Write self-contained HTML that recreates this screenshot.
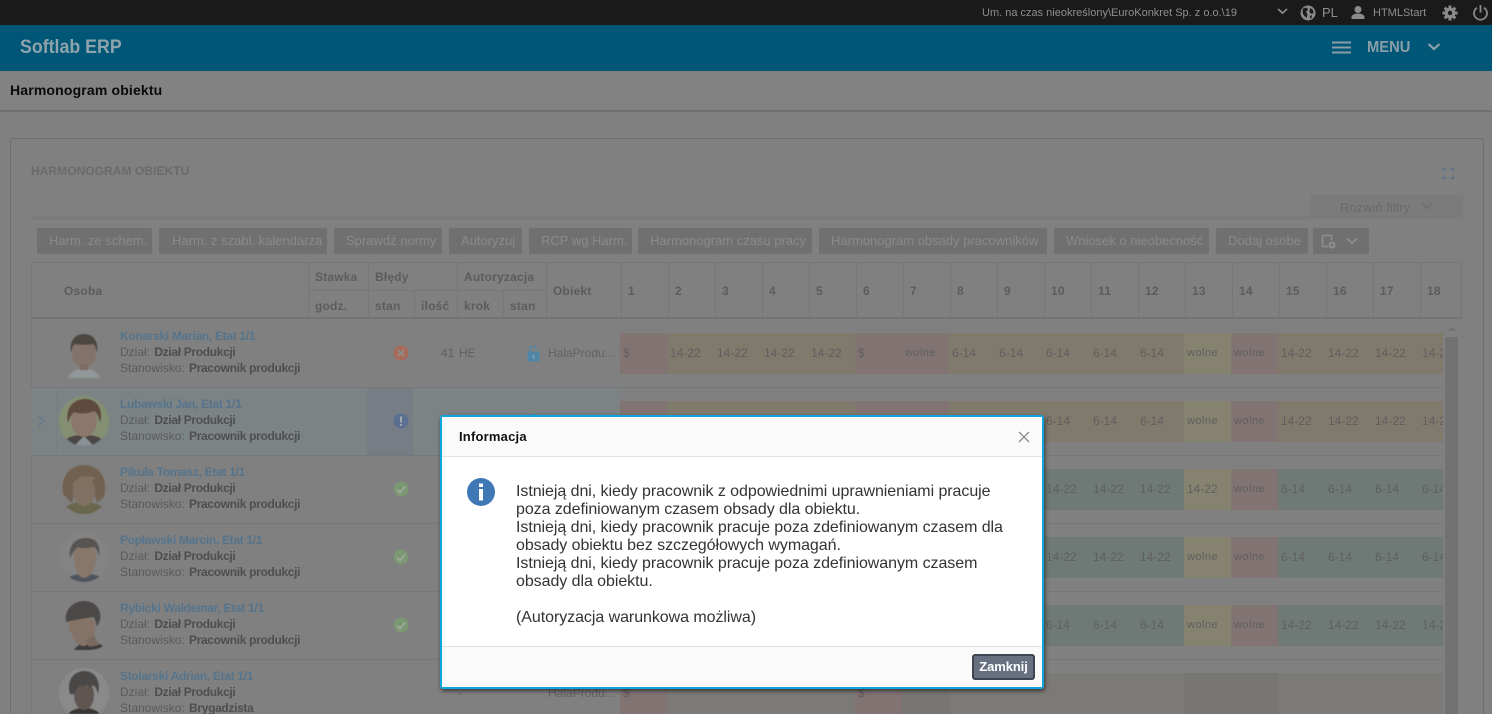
<!DOCTYPE html>
<html lang="pl"><head><meta charset="utf-8"><title>Harmonogram obiektu</title>
<style>
*{box-sizing:border-box}
html,body{margin:0;padding:0;width:1492px;height:714px;overflow:hidden;background:#808080;font-family:"Liberation Sans",sans-serif}
body{position:relative}
.a{position:absolute;white-space:nowrap}
svg{position:absolute;display:block}
.ph{filter:blur(.5px) saturate(.8)}
.btn{position:absolute;top:228px;height:26px;background:#707070;border-radius:2px;color:#8a8a8a;font-size:13px;line-height:26px;padding-left:12px;text-align:left;white-space:nowrap;overflow:hidden}
.h{position:absolute;margin-top:1px;color:#5c5c5c;font-size:12px;font-weight:bold;white-space:nowrap;letter-spacing:.2px}
.v{position:absolute;background:#777;width:1px}
.n{position:absolute;left:120px;font-size:12px;line-height:16px;white-space:nowrap;color:#5a5a5a}
.n b{color:#4e4e4e;letter-spacing:-.33px;margin-left:1px}
.n i{font-style:normal;font-weight:bold;color:#55748c;letter-spacing:-.3px}
.r{position:absolute;left:620px;width:823px;height:41px;display:flex;overflow:hidden}
.r span{flex:0 0 47px;width:47px;height:41px;line-height:40px;padding-left:3px;font-size:12px;color:#5f5f5f;overflow:hidden}
.o{background:#807a6d}.e{background:#837474}.y{background:#85826f}.g{background:#6f7a77}
.r .w{font-size:11px;letter-spacing:.45px;line-height:41px}
.c{background:#7c7a76}.d{background:#787672}
.t{position:absolute;left:516px;margin-top:1px;font-size:16px;line-height:18px;color:#333;white-space:nowrap;letter-spacing:-.06px}
</style></head><body>

<div class="a" style="left:0;top:0;width:1492px;height:25px;background:#1a1a1a"></div>
<div class="a" style="left:982px;top:6px;font-size:11px;line-height:14px;color:#8f8f8f">Um. na czas nieokreślony\EuroKonkret Sp. z o.o.\19</div>
<svg style="left:1277px;top:7px" width="11" height="9" viewBox="0 0 11 9"><path d="M1 2l4.500 4L10 2" fill="none" stroke="#8a8a8a" stroke-width="1.800"/></svg>
<svg style="left:1300px;top:5px" width="16" height="16" viewBox="0 0 16 16"><circle cx="8" cy="8" r="7.500" fill="#8a8a8a"/><path d="M3 3.500l3.500-1 1.500 2-2 2.500 1.500 2.500-1 3.500-3-3-1-3zM10 3l3 2 .5 3-2 1-2-2zM10 11l2-1-.5 3-1.500 .5z" fill="#1a1a1a"/></svg>
<div class="a" style="left:1322px;top:6px;font-size:13px;line-height:14px;color:#8f8f8f">PL</div>
<svg style="left:1351px;top:5px" width="14" height="15" viewBox="0 0 14 15"><circle cx="7" cy="4.500" r="3.500" fill="#8a8a8a"/><path d="M.5 14v-2c0-2 3-3.500 6.500-3.500s6.500 1.500 6.500 3.500v2z" fill="#8a8a8a"/></svg>
<div class="a" style="left:1373px;top:6px;font-size:11px;line-height:14px;color:#8f8f8f">HTMLStart</div>
<svg style="left:1442px;top:5px" width="16" height="16" viewBox="0 0 16 16"><circle cx="8" cy="8" r="3.800" fill="none" stroke="#8a8a8a" stroke-width="3.200"/><path d="M8 .5v3M8 12.500v3M.5 8h3M12.500 8h3M2.700 2.700l2.100 2.100M11.200 11.200l2.100 2.100M2.700 13.300l2.100-2.100M11.200 4.800l2.100-2.100" stroke="#8a8a8a" stroke-width="3"/></svg>
<svg style="left:1472px;top:4px" width="17" height="17" viewBox="0 0 17 17"><path d="M5 3.700a6.500 6.500 0 1 0 7 0M8.500 1v7.500" fill="none" stroke="#8a8a8a" stroke-width="1.800"/></svg>

<div class="a" style="left:0;top:25px;width:1492px;height:46px;background:#005676"></div>
<div class="a" style="left:20px;top:36px;font-size:19px;line-height:24px;font-weight:bold;color:#8ea4ad;transform-origin:0 0;transform:scaleX(.935)">Softlab ERP</div>
<svg style="left:1332px;top:41px" width="20" height="13" viewBox="0 0 20 13"><path d="M0 1.500h19M0 6.500h19M0 11.500h19" stroke="#8a9ea8" stroke-width="2"/></svg>
<div class="a" style="left:1367px;top:38px;font-size:16px;line-height:19px;font-weight:bold;color:#8a9ea8;transform-origin:0 0;transform:scaleX(.92)">MENU</div>
<svg style="left:1427px;top:42px" width="14" height="10" viewBox="0 0 14 10"><path d="M1.500 2L7 7l5.500-5" fill="none" stroke="#8a9ea8" stroke-width="2.200"/></svg>

<div class="a" style="left:0;top:71px;width:1492px;height:41px;background:#828282;border-bottom:2px solid #6f6f6f"></div>
<div class="a" style="left:10px;top:82px;font-size:14px;line-height:17px;font-weight:bold;color:#0a0a0a;letter-spacing:.16px">Harmonogram obiektu</div>

<div class="a" style="left:10px;top:138px;width:1474px;height:580px;border:1px solid #6e6e6e;border-radius:2px;background:#808080"></div>
<div class="a" style="left:31px;top:164px;font-size:12px;line-height:15px;font-weight:bold;color:#6a6a6a;letter-spacing:.05px">HARMONOGRAM OBIEKTU</div>
<svg style="left:1443px;top:168px" width="11" height="11" viewBox="0 0 11 11"><path d="M.7 3.500V.7h2.800M7.500.7h2.800v2.800M10.300 7.500v2.800H7.500M3.500 10.300H.7V7.500" fill="none" stroke="#5f7085" stroke-width="1.400"/></svg>
<div class="a" style="left:31px;top:216px;width:1280px;height:4px;background:#7b7b7b"></div>
<div class="a" style="left:1310px;top:195px;width:153px;height:24px;background:#7b7b7b"></div>
<div class="a" style="left:1340px;top:200px;font-size:13px;line-height:15px;color:#6a6a6a">Rozwiń filtry</div>
<svg style="left:1421px;top:202px" width="12" height="9" viewBox="0 0 12 9"><path d="M1 1.500l5 5 5-5" fill="none" stroke="#6a6a6a" stroke-width="1.200"/></svg>

<div class="btn" style="left:37px;width:115px">Harm. ze schem.</div>
<div class="btn" style="left:159px;width:168px;padding-left:13px">Harm. z szabl. kalendarza</div>
<div class="btn" style="left:334px;width:108px">Sprawdź normy</div>
<div class="btn" style="left:449px;width:73px">Autoryzuj</div>
<div class="btn" style="left:529px;width:103px">RCP wg Harm.</div>
<div class="btn" style="left:638px;width:174px">Harmonogram czasu pracy</div>
<div class="btn" style="left:819px;width:228px">Harmonogram obsady pracowników</div>
<div class="btn" style="left:1054px;width:155px">Wniosek o nieobecność</div>
<div class="btn" style="left:1216px;width:92px">Dodaj osobe</div>
<div class="btn" style="left:1313px;width:56px"></div>
<svg style="left:1321px;top:234px" width="16" height="16" viewBox="0 0 16 16"><path d="M7 12.500H1.500v-11h9V6" fill="none" stroke="#8c8c8c" stroke-width="1.800"/><circle cx="11" cy="11" r="2.500" fill="none" stroke="#8c8c8c" stroke-width="2.200"/></svg>
<svg style="left:1346px;top:237px" width="12" height="8" viewBox="0 0 12 8"><path d="M1 1.500l5 4.500 5-4.500" fill="none" stroke="#8c8c8c" stroke-width="1.800"/></svg>

<!-- table header -->
<div class="a" style="left:31px;top:262px;width:1431px;height:57px;border:1px solid #777;border-bottom:2px solid #747474;background:#808080"></div>
<div class="a" style="left:309px;top:290px;width:237px;height:1px;background:#777"></div>
<div class="v" style="left:308px;top:262px;height:56px"></div>
<div class="v" style="left:368px;top:262px;height:56px"></div>
<div class="v" style="left:414px;top:290px;height:28px"></div>
<div class="v" style="left:457px;top:262px;height:56px"></div>
<div class="v" style="left:503px;top:290px;height:28px"></div>
<div class="v" style="left:546px;top:262px;height:56px"></div>
<div class="v" style="left:621px;top:262px;height:56px"></div>
<div class="v" style="left:668px;top:262px;height:56px"></div>
<div class="v" style="left:715px;top:262px;height:56px"></div>
<div class="v" style="left:762px;top:262px;height:56px"></div>
<div class="v" style="left:809px;top:262px;height:56px"></div>
<div class="v" style="left:856px;top:262px;height:56px"></div>
<div class="v" style="left:903px;top:262px;height:56px"></div>
<div class="v" style="left:950px;top:262px;height:56px"></div>
<div class="v" style="left:997px;top:262px;height:56px"></div>
<div class="v" style="left:1044px;top:262px;height:56px"></div>
<div class="v" style="left:1091px;top:262px;height:56px"></div>
<div class="v" style="left:1138px;top:262px;height:56px"></div>
<div class="v" style="left:1185px;top:262px;height:56px"></div>
<div class="v" style="left:1232px;top:262px;height:56px"></div>
<div class="v" style="left:1279px;top:262px;height:56px"></div>
<div class="v" style="left:1326px;top:262px;height:56px"></div>
<div class="v" style="left:1373px;top:262px;height:56px"></div>
<div class="v" style="left:1420px;top:262px;height:56px"></div>

<div class="h" style="left:64px;top:283px">Osoba</div>
<div class="h" style="left:315px;top:269px">Stawka</div>
<div class="h" style="left:315px;top:298px">godz.</div>
<div class="h" style="left:375px;top:269px">Błędy</div>
<div class="h" style="left:375px;top:298px">stan</div>
<div class="h" style="left:421px;top:298px">ilość</div>
<div class="h" style="left:464px;top:269px">Autoryzacja</div>
<div class="h" style="left:464px;top:298px">krok</div>
<div class="h" style="left:510px;top:298px">stan</div>
<div class="h" style="left:553px;top:283px">Obiekt</div>
<div class="h" style="left:628px;top:283px">1</div>
<div class="h" style="left:675px;top:283px">2</div>
<div class="h" style="left:722px;top:283px">3</div>
<div class="h" style="left:769px;top:283px">4</div>
<div class="h" style="left:816px;top:283px">5</div>
<div class="h" style="left:863px;top:283px">6</div>
<div class="h" style="left:910px;top:283px">7</div>
<div class="h" style="left:957px;top:283px">8</div>
<div class="h" style="left:1004px;top:283px">9</div>
<div class="h" style="left:1051px;top:283px">10</div>
<div class="h" style="left:1098px;top:283px">11</div>
<div class="h" style="left:1145px;top:283px">12</div>
<div class="h" style="left:1192px;top:283px">13</div>
<div class="h" style="left:1239px;top:283px">14</div>
<div class="h" style="left:1286px;top:283px">15</div>
<div class="h" style="left:1333px;top:283px">16</div>
<div class="h" style="left:1380px;top:283px">17</div>
<div class="h" style="left:1427px;top:283px">18</div>

<!-- body frame and rows -->
<div class="v" style="left:31px;top:319px;height:395px"></div>
<div class="a" style="left:31px;top:388px;width:589px;height:67px;background:#7c8385"></div>
<div class="a" style="left:367px;top:388px;width:46px;height:67px;background:#767d85"></div>
<div class="v" style="left:56px;top:388px;height:67px;background:#76807f"></div>
<div class="a" style="left:31px;top:387px;width:1412px;height:1px;background:#787878"></div>
<div class="a" style="left:31px;top:455px;width:1412px;height:1px;background:#787878"></div>
<div class="a" style="left:31px;top:523px;width:1412px;height:1px;background:#787878"></div>
<div class="a" style="left:31px;top:591px;width:1412px;height:1px;background:#787878"></div>
<div class="a" style="left:31px;top:659px;width:1412px;height:1px;background:#787878"></div>
<svg style="left:37px;top:415px" width="9" height="12" viewBox="0 0 9 12"><path d="M1.500 1l5 5-5 5" fill="none" stroke="#5f7a95" stroke-width="1.300"/></svg>

<!-- scrollbar -->
<div class="a" style="left:1445px;top:337px;width:13px;height:377px;background:#727272"></div>
<svg style="left:1447px;top:326px" width="9" height="6" viewBox="0 0 9 6"><path d="M0 5l4.500-4.500L9 5z" fill="#747474"/></svg>

<!-- photos -->
<svg class="ph" style="left:59px;top:328px" width="50" height="50" viewBox="0 0 50 50"><path d="M9 50c2-7 9-9 16-9s14 2 16 9z" fill="#8f989c"/><ellipse cx="25" cy="24" rx="12" ry="16" fill="#887268"/><path d="M12 25c-2-12 4-19 13-19s15 7 13 19c-1-5-2-8-4-9-6 1-12 1-18 0-2 1-3 4-4 9z" fill="#4d4640"/><rect x="21" y="36" width="8" height="6" fill="#7e6a60"/></svg>
<svg class="ph" style="left:59px;top:396px" width="50" height="50" viewBox="0 0 50 50"><defs><clipPath id="c1"><circle cx="25" cy="25" r="25"/></clipPath></defs><g clip-path="url(#c1)"><rect width="50" height="50" fill="#83906c"/><path d="M3 50c2-9 12-11 22-11s20 2 22 11z" fill="#4c4644"/><path d="M15 50l10-10 10 10z" fill="#8a9298"/><ellipse cx="25" cy="25" rx="13" ry="16" fill="#8f7767"/><path d="M9 27C6 11 15 3 26 3s19 9 15 24c-1-5-2-9-6-12-7 3-15 3-20 1-3 3-5 7-6 11z" fill="#63493a"/></g></svg>
<svg class="ph" style="left:59px;top:464px" width="50" height="50" viewBox="0 0 50 50"><defs><clipPath id="c2"><circle cx="25" cy="25" r="25"/></clipPath></defs><g clip-path="url(#c2)"><rect width="50" height="50" fill="#7f7f7f"/><path d="M2 50c2-8 12-12 23-12s21 4 23 12z" fill="#6a6648"/><path d="M4 30C1 12 12 1 25 1s25 11 20 32l-7 6-6-24-14 2-5 22z" fill="#75604d"/><ellipse cx="25" cy="27" rx="11" ry="15" fill="#84705f"/><path d="M13 22c2-8 14-12 24-8l-8 5z" fill="#84705a"/></g></svg>
<svg class="ph" style="left:59px;top:532px" width="50" height="50" viewBox="0 0 50 50"><defs><clipPath id="c3"><circle cx="25" cy="25" r="25"/></clipPath></defs><g clip-path="url(#c3)"><rect width="50" height="50" fill="#838383"/><path d="M6 50c2-6 10-8 20-8s18 2 20 8z" fill="#4c5562"/><path d="M15 24c0-6 5-11 12-11s11 5 10 13c-1 10-5 20-12 20-6 0-10-10-10-22z" fill="#8a7668"/><path d="M11 26C9 13 17 6 27 6s15 7 13 18c-1-4-2-7-5-9-6 1-11 2-16 0-3 3-6 6-8 11z" fill="#585450"/></g></svg>
<svg class="ph" style="left:59px;top:600px" width="50" height="50" viewBox="0 0 50 50"><path d="M15 50c3-5 10-8 16-8 6 0 10 2 13 4-4 3-10 4-16 4z" fill="#3d3b3b"/><path d="M9 20c10-3 22-2 27 0 1 13-3 23-10 26-8 1-15-9-17-26z" fill="#8a7263"/><path d="M7 22C5 10 14 1 25 1s18 8 16 19l-3 7c-1-5-2-8-3-10-8 1-16 2-28 5z" fill="#4c4846"/><path d="M26 40l4 7 10-2-5-10z" fill="#7d695c"/></svg>
<svg class="ph" style="left:59px;top:668px" width="50" height="46" viewBox="0 0 50 46"><defs><clipPath id="c4"><circle cx="25" cy="25" r="25"/></clipPath></defs><g clip-path="url(#c4)"><rect width="50" height="50" fill="#8a8a8a"/><path d="M6 50c3-7 11-10 19-10s16 3 19 10z" fill="#393736"/><ellipse cx="25" cy="27" rx="10" ry="15" fill="#62564f"/><path d="M11 26C8 15 12 4 25 3c12 0 17 11 14 23-1-4-2-7-5-9l-3 3-3-4-4 3-3-2-3 4c-1 1-2 3-3 5z" fill="#4a4845"/></g></svg>

<!-- person text -->
<div class="n" style="top:328px"><i>Konarski Marian, Etat 1/1</i><br>Dział: <b>Dział Produkcji</b><br>Stanowisko: <b>Pracownik produkcji</b></div>
<div class="n" style="top:396px"><i>Lubawski Jan, Etat 1/1</i><br>Dział: <b>Dział Produkcji</b><br>Stanowisko: <b>Pracownik produkcji</b></div>
<div class="n" style="top:464px"><i>Pikuła Tomasz, Etat 1/1</i><br>Dział: <b>Dział Produkcji</b><br>Stanowisko: <b>Pracownik produkcji</b></div>
<div class="n" style="top:532px"><i>Popławski Marcin, Etat 1/1</i><br>Dział: <b>Dział Produkcji</b><br>Stanowisko: <b>Pracownik produkcji</b></div>
<div class="n" style="top:600px"><i>Rybicki Waldemar, Etat 1/1</i><br>Dział: <b>Dział Produkcji</b><br>Stanowisko: <b>Pracownik produkcji</b></div>
<div class="n" style="top:668px"><i>Stolarski Adrian, Etat 1/1</i><br>Dział: <b>Dział Produkcji</b><br>Stanowisko: <b>Brygadzista</b></div>

<!-- status icons -->
<svg style="left:393px;top:345px" width="16" height="16" viewBox="0 0 16 16"><circle cx="8" cy="8" r="7.500" fill="#a96b59"/><path d="M5 5l6 6M11 5l-6 6" stroke="#8f8f8f" stroke-width="1.800"/></svg>
<svg style="left:393px;top:413px" width="16" height="16" viewBox="0 0 16 16"><circle cx="8" cy="8" r="7.500" fill="#5b6f90"/><path d="M8 3.500v6" stroke="#a0a8b0" stroke-width="2"/><circle cx="8" cy="12" r="1.100" fill="#a0a8b0"/></svg>
<svg style="left:393px;top:481px" width="16" height="16" viewBox="0 0 16 16"><circle cx="8" cy="8" r="7.500" fill="#7c9873"/><path d="M4 8.500l3 3 5-6" fill="none" stroke="#a0a8a0" stroke-width="1.800"/></svg>
<svg style="left:393px;top:549px" width="16" height="16" viewBox="0 0 16 16"><circle cx="8" cy="8" r="7.500" fill="#7c9873"/><path d="M4 8.500l3 3 5-6" fill="none" stroke="#a0a8a0" stroke-width="1.800"/></svg>
<svg style="left:393px;top:617px" width="16" height="16" viewBox="0 0 16 16"><circle cx="8" cy="8" r="7.500" fill="#7c9873"/><path d="M4 8.500l3 3 5-6" fill="none" stroke="#a0a8a0" stroke-width="1.800"/></svg>
<div class="a" style="left:441px;top:346px;font-size:12px;line-height:14px;color:#5f5f5f">41</div>
<div class="a" style="left:459px;top:346px;font-size:12px;line-height:14px;color:#5f5f5f">HE</div>
<svg style="left:527px;top:345px" width="13" height="17" viewBox="0 0 13 17"><path d="M3 7V4.500a3.300 3.300 0 0 1 6.500-.5" fill="none" stroke="#4f86a6" stroke-width="1.500"/><rect x=".5" y="6.500" width="12" height="10" rx="1.500" fill="#4f86a6"/><rect x="5.500" y="10" width="2" height="3.500" fill="#7a9aaa"/></svg>
<div class="a" style="left:548px;top:346px;font-size:12px;line-height:14px;color:#626262">HalaProdu...</div>
<svg style="left:527px;top:413px" width="13" height="4" viewBox="0 0 13 4"><path d="M3 5V4.500a3.300 3.300 0 0 1 6.500-.5" fill="none" stroke="#4f86a6" stroke-width="1.500"/></svg>
<div class="a" style="left:458px;top:686px;font-size:12px;line-height:14px;color:#5f5f5f">-</div>
<div class="a" style="left:548px;top:686px;font-size:12px;line-height:14px;color:#626262">HalaProdu...</div>

<!-- schedule cells -->
<div class="r" style="top:333px"><span class="e">$</span><span class="o">14-22</span><span class="o">14-22</span><span class="o">14-22</span><span class="o">14-22</span><span class="e">$</span><span class="e w">wolne</span><span class="o">6-14</span><span class="o">6-14</span><span class="o">6-14</span><span class="o">6-14</span><span class="o">6-14</span><span class="y w">wolne</span><span class="e w">wolne</span><span class="o">14-22</span><span class="o">14-22</span><span class="o">14-22</span><span class="o">14-22</span></div>
<div class="r" style="top:401px"><span class="e">$</span><span class="o">14-22</span><span class="o">14-22</span><span class="o">14-22</span><span class="o">14-22</span><span class="e">$</span><span class="e w">wolne</span><span class="o">6-14</span><span class="o">6-14</span><span class="o">6-14</span><span class="o">6-14</span><span class="o">6-14</span><span class="y w">wolne</span><span class="e w">wolne</span><span class="o">14-22</span><span class="o">14-22</span><span class="o">14-22</span><span class="o">14-22</span></div>
<div class="r" style="top:469px"><span class="g"></span><span class="g"></span><span class="g"></span><span class="g"></span><span class="g"></span><span class="g"></span><span class="g"></span><span class="g"></span><span class="g"></span><span class="g">14-22</span><span class="g">14-22</span><span class="g">14-22</span><span class="y">14-22</span><span class="e w">wolne</span><span class="g">6-14</span><span class="g">6-14</span><span class="g">6-14</span><span class="g">6-14</span></div>
<div class="r" style="top:537px"><span class="g"></span><span class="g"></span><span class="g"></span><span class="g"></span><span class="g"></span><span class="g"></span><span class="g"></span><span class="g"></span><span class="g"></span><span class="g">14-22</span><span class="g">14-22</span><span class="g">14-22</span><span class="y w">wolne</span><span class="e w">wolne</span><span class="g">6-14</span><span class="g">6-14</span><span class="g">6-14</span><span class="g">6-14</span></div>
<div class="r" style="top:605px"><span class="g"></span><span class="g"></span><span class="g"></span><span class="g"></span><span class="g"></span><span class="g"></span><span class="g"></span><span class="g"></span><span class="g"></span><span class="g">6-14</span><span class="g">6-14</span><span class="g">6-14</span><span class="y w">wolne</span><span class="e w">wolne</span><span class="g">14-22</span><span class="g">14-22</span><span class="g">14-22</span><span class="g">14-22</span></div>
<div class="r" style="top:673px"><span class="e">$</span><span class="c"></span><span class="c"></span><span class="c"></span><span class="c"></span><span class="e">$</span><span class="d"></span><span class="c"></span><span class="c"></span><span class="c"></span><span class="c"></span><span class="c"></span><span class="d"></span><span class="d"></span><span class="c"></span><span class="c"></span><span class="c"></span><span class="c"></span></div>

<!-- modal -->
<div class="a" style="left:440px;top:415px;width:604px;height:274px;background:#fff;border:2px solid #0ea5e0;border-radius:3px;box-shadow:1px 2px 4px rgba(0,0,0,.55)"></div>
<div class="a" style="left:442px;top:417px;width:600px;height:40px;background:#fafafa;border-bottom:1px solid #e2e2e2"></div>
<div class="a" style="left:459px;top:429px;font-size:13px;line-height:16px;font-weight:bold;color:#111;letter-spacing:.2px">Informacja</div>
<svg style="left:1018px;top:431px" width="12" height="12" viewBox="0 0 12 12"><path d="M1 1l10 10M11 1L1 11" stroke="#8c8c8c" stroke-width="1.300"/></svg>
<svg style="left:467px;top:478px" width="28" height="28" viewBox="0 0 28 28"><circle cx="14" cy="14" r="14" fill="#3f78b4"/><rect x="12" y="11" width="4" height="11.500" fill="#fff"/><rect x="12" y="5.500" width="4" height="3.500" fill="#fff"/></svg>
<div class="t" style="top:482px">Istnieją dni, kiedy pracownik z odpowiednimi uprawnieniami pracuje</div>
<div class="t" style="top:500px">poza zdefiniowanym czasem obsady dla obiektu.</div>
<div class="t" style="top:518px">Istnieją dni, kiedy pracownik pracuje poza zdefiniowanym czasem dla</div>
<div class="t" style="top:536px">obsady obiektu bez szczegółowych wymagań.</div>
<div class="t" style="top:554px">Istnieją dni, kiedy pracownik pracuje poza zdefiniowanym czasem</div>
<div class="t" style="top:572px">obsady dla obiektu.</div>
<div class="t" style="top:608px">(Autoryzacja warunkowa możliwa)</div>
<div class="a" style="left:442px;top:646px;width:600px;height:41px;background:#fafafa;border-top:1px solid #e0e0e0"></div>
<div class="a" style="left:972px;top:654px;width:63px;height:26px;background:#667080;border:2px solid #3d4551;border-radius:3px;color:#fff;font-size:13px;font-weight:bold;line-height:22px;text-align:center;letter-spacing:-.1px">Zamknij</div>
</body></html>
